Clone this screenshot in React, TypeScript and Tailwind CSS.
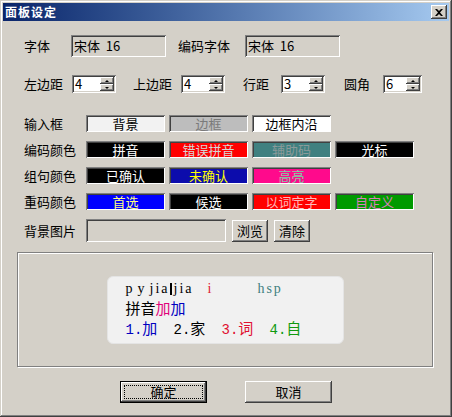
import React from 'react';

const raised =
  'shadow-[inset_-1px_-1px_#404040,inset_1px_1px_#ffffff,inset_-2px_-2px_#808080,inset_2px_2px_#d4d0c8]';
const sunken =
  'shadow-[inset_1px_1px_#808080,inset_-1px_-1px_#ffffff,inset_2px_2px_#404040,inset_-2px_-2px_#d4d0c8]';

const cjk = "font-['Noto_Sans_CJK_SC','Noto_Sans',sans-serif]";

interface Swatch {
  label: string;
  bg: string;
  fg: string;
}

const rows: { title: string; items: Swatch[] }[] = [
  {
    title: '输入框',
    items: [
      { label: '背景', bg: 'bg-[#f2f2f2]', fg: 'text-black' },
      { label: '边框', bg: 'bg-[#bdbdbd]', fg: 'text-[#7a7a7a]' },
      { label: '边框内沿', bg: 'bg-white', fg: 'text-black' },
    ],
  },
  {
    title: '编码颜色',
    items: [
      { label: '拼音', bg: 'bg-black', fg: 'text-white' },
      { label: '错误拼音', bg: 'bg-[#ff0000]', fg: 'text-[#d6d6d6]' },
      { label: '辅助码', bg: 'bg-[#408080]', fg: 'text-[#8a9a9a]' },
      { label: '光标', bg: 'bg-black', fg: 'text-white' },
    ],
  },
  {
    title: '组句颜色',
    items: [
      { label: '已确认', bg: 'bg-black', fg: 'text-white' },
      { label: '未确认', bg: 'bg-[#0c0cac]', fg: 'text-[#ffff00]' },
      { label: '高亮', bg: 'bg-[#ff0a8c]', fg: 'text-[#80d0a8]' },
    ],
  },
  {
    title: '重码颜色',
    items: [
      { label: '首选', bg: 'bg-[#0000ff]', fg: 'text-[#ffff80]' },
      { label: '候选', bg: 'bg-black', fg: 'text-white' },
      { label: '以词定字', bg: 'bg-[#ff0000]', fg: 'text-[#ffb8b8]' },
      { label: '自定义', bg: 'bg-[#009a00]', fg: 'text-[#d880b8]' },
    ],
  },
];

const Spin = ({ value, w = 'w-[44px]' }: { value: string; w?: string }) => (
  <div className={`${w} h-[18px] flex bg-white p-[2px] ${sunken}`}>
    <div className="flex-1 pl-[1px] text-[13px] leading-[14px] text-black">{value}</div>
    <div className="w-[14px] flex flex-col">
      <div className={`h-[7px] bg-[#d4d0c8] ${raised} flex items-center justify-center`}>
        <div className="w-0 h-0 border-l-[2px] border-r-[2px] border-b-[2px] border-l-transparent border-r-transparent border-b-black" />
      </div>
      <div className={`h-[7px] bg-[#d4d0c8] ${raised} flex items-center justify-center`}>
        <div className="w-0 h-0 border-l-[2px] border-r-[2px] border-t-[2px] border-l-transparent border-r-transparent border-t-black" />
      </div>
    </div>
  </div>
);

const App: React.FC = () => {
  return (
    <div
      className={`w-[452px] h-[417px] bg-[#d4d0c8] p-[3px] flex flex-col text-black ${cjk} shadow-[inset_-1px_-1px_#404040,inset_1px_1px_#d4d0c8,inset_-2px_-2px_#808080,inset_2px_2px_#ffffff]`}
    >
      {/* title bar */}
      <div className="h-[18px] flex items-center justify-between pl-[2px] pr-[2px] bg-gradient-to-r from-[#0a246a] to-[#a6caf0]">
        <span className="text-white font-bold text-[12px] leading-none tracking-[1px]">面板设定</span>
        <div className={`w-[16px] h-[14px] bg-[#d4d0c8] ${raised} flex items-center justify-center`}>
          <svg width="8" height="7" viewBox="0 0 8 7">
            <path d="M0 0h2l2 2 2-2h2L5 3.5 8 7H6L4 5 2 7H0l3-3.5z" fill="#000" />
          </svg>
        </div>
      </div>

      {/* font row */}
      <div className="mt-[14px] ml-[21px] flex items-center h-[22px] text-[13px]">
        <span className="w-[47px]">字体</span>
        <div className={`w-[95px] h-[22px] pl-[3px] flex items-center ${sunken}`}>宋体&nbsp;&nbsp;16</div>
        <span className="ml-[12px] w-[67px]">编码字体</span>
        <div className={`w-[95px] h-[22px] pl-[3px] flex items-center ${sunken}`}>宋体&nbsp;&nbsp;16</div>
      </div>

      {/* spacing row */}
      <div className="mt-[18px] ml-[21px] flex items-center h-[18px] text-[13px]">
        <span className="w-[48px]">左边距</span>
        <Spin value="4" />
        <span className="ml-[17px] w-[48px]">上边距</span>
        <Spin value="4" />
        <span className="ml-[18px] w-[38px]">行距</span>
        <Spin value="3" />
        <span className="ml-[19px] w-[39px]">圆角</span>
        <Spin value="6" w="w-[39px]" />
      </div>

      {/* colour rows */}
      <div className="mt-[22px] ml-[21px] flex flex-col gap-[9px]">
        {rows.map((r) => (
          <div key={r.title} className="flex items-center h-[17px] text-[13px]">
            <span className="w-[62px]">{r.title}</span>
            <div className="flex gap-[4px]">
              {r.items.map((s) => (
                <div
                  key={s.label}
                  className={`w-[79px] h-[17px] flex items-center justify-center text-[13px] leading-none ${s.bg} ${s.fg} shadow-[inset_1px_1px_#808080,inset_-1px_-1px_#ffffff,inset_2px_2px_#404040]`}
                >
                  {s.label}
                </div>
              ))}
            </div>
          </div>
        ))}
        <div className="flex items-center h-[23px] text-[13px]">
          <span className="w-[62px]">背景图片</span>
          <div className={`w-[140px] h-[23px] ${sunken}`} />
          <div className={`ml-[6px] w-[36px] h-[22px] flex items-center justify-center ${raised}`}>浏览</div>
          <div className={`ml-[6px] w-[36px] h-[22px] flex items-center justify-center ${raised}`}>清除</div>
        </div>
      </div>

      {/* preview group */}
      <div className="mt-[10px] ml-[14px] w-[416px] h-[115px] border border-[#808080] shadow-[inset_1px_1px_#ffffff,1px_1px_#ffffff] flex items-center justify-center">
        <div className="w-[237px] h-[68px] rounded-[6px] bg-[#f1f1f1] border border-[#e4e4e4] pl-[18px] pt-[3px] flex flex-col">
          <div className="h-[18px] flex items-center text-[14px] font-['Liberation_Serif',serif] tracking-[2px]">
            <span>p</span>
            <span className="ml-[3px]">y</span>
            <span className="ml-[3px]">jia</span>
            <span className="w-[2px] h-[12px] bg-black mr-[2px]" />
            <span>jia</span>
            <span className="ml-[14px] text-[#e02030]">i</span>
            <span className="ml-[44px] text-[#408080]">hsp</span>
          </div>
          <div className="h-[19px] flex items-center text-[15px] leading-none">
            <span>拼音</span>
            <span className="text-[#e0007a]">加</span>
            <span className="text-[#0000c0]">加</span>
          </div>
          <div className="h-[23px] flex items-center text-[15px] leading-none">
            <span className="w-[48px] text-[#0000c0]">
              <span className="font-['Liberation_Mono',monospace] text-[14px]">1.</span>加
            </span>
            <span className="w-[48px]">
              <span className="font-['Liberation_Mono',monospace] text-[14px]">2.</span>家
            </span>
            <span className="w-[48px] text-[#e01030]">
              <span className="font-['Liberation_Mono',monospace] text-[14px]">3.</span>词
            </span>
            <span className="w-[48px] text-[#109a10]">
              <span className="font-['Liberation_Mono',monospace] text-[14px]">4.</span>自
            </span>
          </div>
        </div>
      </div>

      {/* buttons */}
      <div className="mt-[14px] flex text-[13px]">
        <div className="ml-[117px] w-[87px] h-[22px] border border-black flex">
          <div className={`flex-1 flex items-center justify-center ${raised} outline-1 outline-dotted outline-black outline-offset-[-4px]`}>
            确定
          </div>
        </div>
        <div className={`ml-[38px] w-[87px] h-[22px] flex items-center justify-center ${raised}`}>取消</div>
      </div>
    </div>
  );
};

export default App;
